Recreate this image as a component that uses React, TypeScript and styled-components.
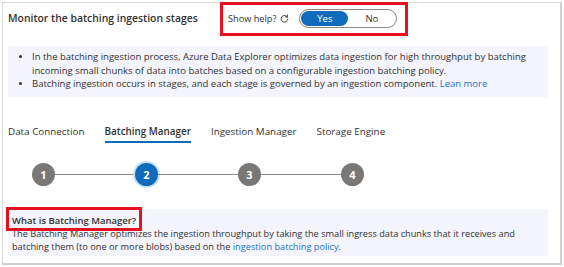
import React from 'react';
import styled, { createGlobalStyle } from 'styled-components';

const GlobalStyle = createGlobalStyle`
  body {
    margin: 0;
    background: #fff;
    font-family: "Open Sans", "Noto Sans", Arial, sans-serif;
    color: #323130;
  }
`;

const Frame = styled.div`
  box-sizing: border-box;
  width: 560px;
  height: 263px;
  margin: 2px 0 0 2px;
  border: 1px solid #d8d8d8;
  border-right: 2px solid #d0d0d0;
  border-bottom: 2px solid #d0d0d0;
  padding: 0 12px 0 5px;
  display: flex;
  flex-direction: column;
`;

const Header = styled.div`
  display: flex;
  align-items: center;
  height: 30px;
`;

const Title = styled.div`
  flex: 0 0 220px;
  font-size: 10.4px;
  font-weight: 600;
`;

// red annotation frame drawn over a part of the page
const Marked = styled.div<{ $inset: string }>`
  position: relative;
  &::after {
    content: '';
    position: absolute;
    inset: ${p => p.$inset};
    border: 3px solid #e8101f;
    pointer-events: none;
  }
`;

const HelpGroup = styled.div`
  display: flex;
  align-items: center;
  font-size: 9.2px;
`;

const RefreshIcon = styled.svg`
  margin-left: 4px;
  margin-right: 10px;
`;

const Toggle = styled.div`
  box-sizing: border-box;
  display: flex;
  width: 98px;
  height: 19px;
  padding: 1px;
  border: 1px solid #8a8886;
  border-radius: 10px;
`;

const ToggleOption = styled.div<{ $active?: boolean }>`
  flex: ${p => (p.$active ? '0 0 47px' : '1')};
  display: flex;
  align-items: center;
  justify-content: center;
  border-radius: 8px;
  font-size: 9.5px;
  background: ${p => (p.$active ? '#0f6cbd' : 'transparent')};
  color: ${p => (p.$active ? '#fff' : '#323130')};
`;

const InfoBox = styled.div`
  box-sizing: border-box;
  margin-top: 13px;
  height: 51px;
  background: #f4f4fc;
  padding: 4px 8px 0 0;
`;

const BulletList = styled.ul`
  margin: 0;
  padding-left: 24px;
  font-size: 9.5px;
  line-height: 13.5px;
  li::marker {
    font-size: 8px;
  }
`;

const Link = styled.a`
  color: #1a73c9;
  text-decoration: none;
`;

const TabRow = styled.div`
  display: flex;
  gap: 20px;
  margin-top: 26px;
`;

const Tab = styled.div<{ $active?: boolean }>`
  font-size: 9.85px;
  line-height: 16px;
  padding-bottom: 2px;
  font-weight: ${p => (p.$active ? 600 : 400)};
  border-bottom: 2px solid ${p => (p.$active ? '#0f6cbd' : 'transparent')};
`;

const Stepper = styled.div`
  display: flex;
  align-items: center;
  margin: 20px 0 0 24px;
`;

const Step = styled.div<{ $active?: boolean }>`
  flex: 0 0 23px;
  height: 23px;
  border-radius: 50%;
  display: flex;
  align-items: center;
  justify-content: center;
  color: #fff;
  font-size: 11px;
  font-weight: 700;
  background: ${p => (p.$active ? '#0f6cbd' : '#7a7876')};
  box-shadow: ${p => (p.$active ? '0 0 0 2px #c7e0f4' : 'none')};
`;

const StepLine = styled.div`
  flex: 0 0 80px;
  height: 1.5px;
  background: #8a8886;
`;

const DetailBox = styled.div`
  box-sizing: border-box;
  margin-top: 23px;
  height: 47px;
  background: #f4f4fc;
  padding: 5px 8px 0 4px;
  font-size: 9.2px;
  line-height: 13px;
`;

const DetailHeading = styled(Marked)`
  display: inline-block;
  font-size: 9.5px;
  font-weight: 600;
`;

const DetailText = styled.p`
  margin: 0;
`;

const tabs = ['Data Connection', 'Batching Manager', 'Ingestion Manager', 'Storage Engine'];

export default function App() {
  return (
    <>
      <GlobalStyle />
      <Frame>
        <Header>
          <Title>Monitor the batching ingestion stages</Title>
          <Marked $inset="-7px -11px -8px -8px">
            <HelpGroup>
              Show help?
              <RefreshIcon width="9" height="9" viewBox="0 0 16 16" fill="none" stroke="#323130" strokeWidth="1.6">
                <path d="M13 5.2A6 6 0 1 0 14 9" strokeLinecap="round" />
                <path d="M13.4 1.8v3.6H9.8" strokeLinecap="round" strokeLinejoin="round" />
              </RefreshIcon>
              <Toggle>
                <ToggleOption $active>Yes</ToggleOption>
                <ToggleOption>No</ToggleOption>
              </Toggle>
            </HelpGroup>
          </Marked>
        </Header>

        <InfoBox>
          <BulletList>
            <li>
              In the batching ingestion process, Azure Data Explorer optimizes data ingestion for high throughput by batching
              incoming small chunks of data into batches based on a configurable ingestion batching policy.
            </li>
            <li>
              Batching ingestion occurs in stages, and each stage is governed by an ingestion component.{' '}
              <Link href="#">Lean more</Link>
            </li>
          </BulletList>
        </InfoBox>

        <TabRow>
          {tabs.map(t => (
            <Tab key={t} $active={t === 'Batching Manager'}>{t}</Tab>
          ))}
        </TabRow>

        <Stepper>
          <Step>1</Step>
          <StepLine />
          <Step $active>2</Step>
          <StepLine />
          <Step>3</Step>
          <StepLine />
          <Step>4</Step>
        </Stepper>

        <DetailBox>
          <DetailHeading $inset="-7px -6px -4px -6px">What is Batching Manager?</DetailHeading>
          <DetailText>
            The Batching Manager optimizes the ingestion throughput by taking the small ingress data chunks that it receives and
            batching them (to one or more blobs) based on the <Link href="#">ingestion batching policy</Link>.
          </DetailText>
        </DetailBox>
      </Frame>
    </>
  );
}
